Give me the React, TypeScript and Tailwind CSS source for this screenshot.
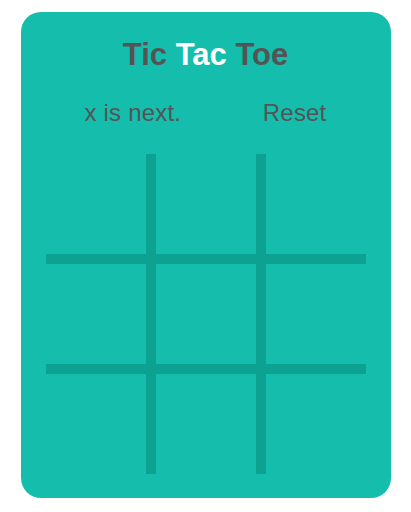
import { useState } from "react";

const Square = ({ value, onClick }: any) => {
  return (
    <button
      onClick={onClick}
      className="bg-[#14bdac] w-[100px] h-[100px] flex items-center justify-center text-[64px] font-bold text-[#545454]"
    >
      {value}
    </button>
  );
};

const App = () => {
  const [squares, setSquares] = useState<(string | null)[]>(Array(9).fill(null));
  const [xIsNext, setXIsNext] = useState(true);

  const handleClick = (i: number) => {
    if (squares[i]) return;
    const next = squares.slice();
    next[i] = xIsNext ? "x" : "o";
    setSquares(next);
    setXIsNext(!xIsNext);
  };

  const reset = () => {
    setSquares(Array(9).fill(null));
    setXIsNext(true);
  };

  return (
    <div className="bg-white min-h-[512px] pt-3 font-['Liberation_Sans',Arial,sans-serif]">
      <div className="mx-auto w-[370px] h-[486px] bg-[#14bdac] rounded-[20px] pt-[25px] flex flex-col items-center">
        <h1 className="text-[31px] leading-[36px] font-bold text-[#545454]">
          Tic <span className="text-white">Tac</span> Toe
        </h1>
        <div className="mt-6 w-[242px] flex justify-between text-[24px] leading-[32px] text-[#545454] tracking-[0.2px]">
          <span>{xIsNext ? "x" : "o"} is next.</span>
          <button onClick={reset} className="leading-[32px]">
            Reset
          </button>
        </div>
        <div className="mt-[25px] grid grid-cols-3 gap-[10px] bg-[#0da192] w-[320px] h-[320px]">
          {squares.map((value, i) => (
            <Square key={i} value={value} onClick={() => handleClick(i)} />
          ))}
        </div>
      </div>
    </div>
  );
};

export default App;
